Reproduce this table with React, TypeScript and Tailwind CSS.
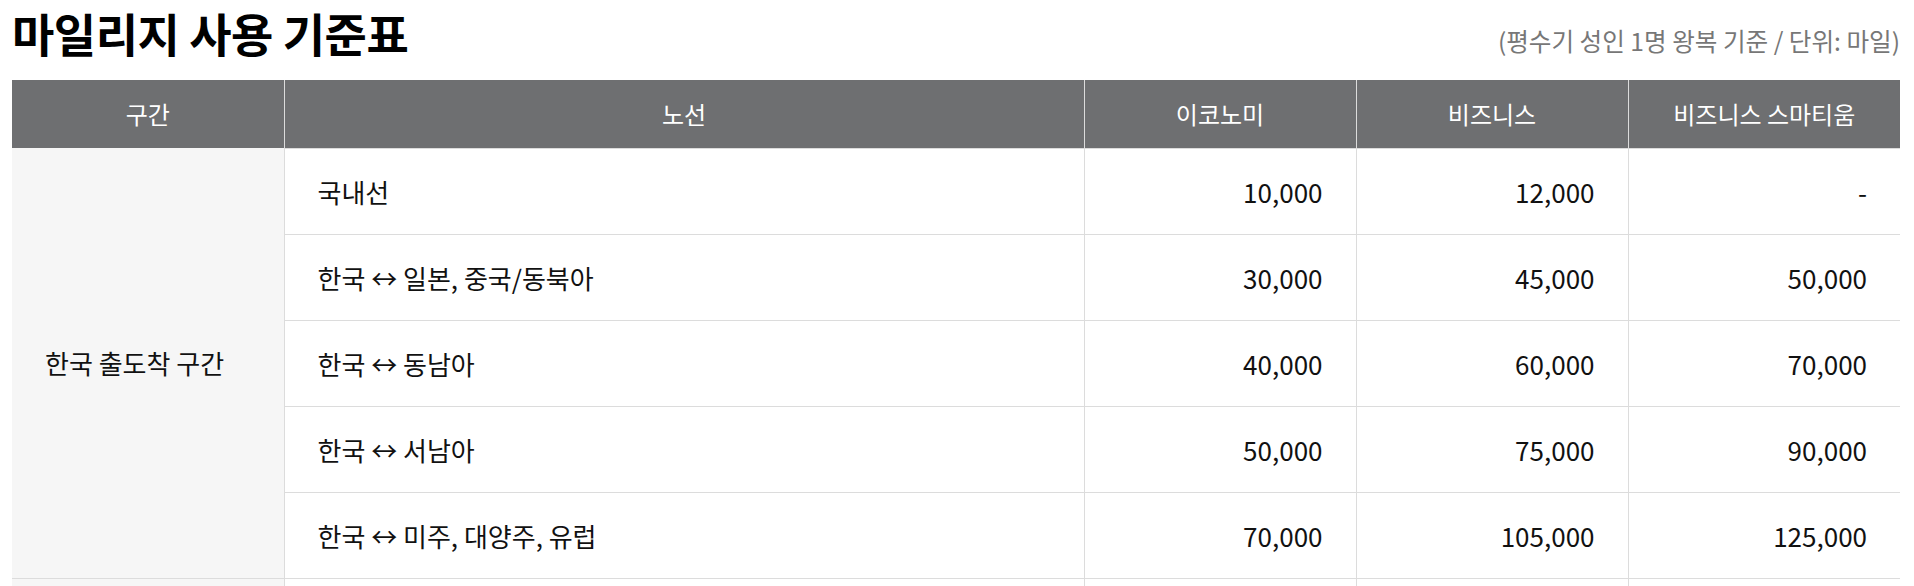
import React from 'react';

type Row = { route: string; economy: string; business: string; smartium: string };

const rows: Row[] = [
  { route: '국내선', economy: '10,000', business: '12,000', smartium: '-' },
  { route: '한국 ↔ 일본, 중국/동북아', economy: '30,000', business: '45,000', smartium: '50,000' },
  { route: '한국 ↔ 동남아', economy: '40,000', business: '60,000', smartium: '70,000' },
  { route: '한국 ↔ 서남아', economy: '50,000', business: '75,000', smartium: '90,000' },
  { route: '한국 ↔ 미주, 대양주, 유럽', economy: '70,000', business: '105,000', smartium: '125,000' },
];

export default function App() {
  return (
    <div className="w-[1914px] h-[586px] overflow-hidden bg-white pl-[12px] pr-[14px] font-['Noto_Sans_CJK_KR',sans-serif] text-[#111]">
      {/* Title */}
      <div className="flex items-end justify-between h-[80px] pb-[25px]">
        <h1 className="text-[46px] leading-none font-bold tracking-[-0.5px] text-black">마일리지 사용 기준표</h1>
        <p className="text-[24.6px] leading-none text-[#777] pb-[2px]">(평수기 성인 1명 왕복 기준 / 단위: 마일)</p>
      </div>

      {/* Table */}
      <table className="w-[1888px] table-fixed border-collapse">
        <colgroup>
          <col className="w-[272px]" />
          <col className="w-[800px]" />
          <col className="w-[272px]" />
          <col className="w-[272px]" />
          <col className="w-[272px]" />
        </colgroup>
        <thead>
          <tr className="h-[68px] bg-[#6e6f71] text-white text-[24px]">
            <th className="font-normal border-x border-[#dcdcdc] border-l-0">구간</th>
            <th className="font-normal border-x border-[#dcdcdc]">노선</th>
            <th className="font-normal border-x border-[#dcdcdc]">이코노미</th>
            <th className="font-normal border-x border-[#dcdcdc]">비즈니스</th>
            <th className="font-normal border-x border-[#dcdcdc] border-r-0">비즈니스 스마티움</th>
          </tr>
        </thead>
        <tbody className="text-[26px]">
          {rows.map((r, i) => (
            <tr key={r.route} className="h-[86px]">
              {i === 0 && (
                <td rowSpan={5} className="bg-[#f6f6f6] px-[33px] border-b border-r border-[#dcdcdc]">
                  한국 출도착 구간
                </td>
              )}
              <td className="px-[33px] border border-[#dcdcdc]">{r.route}</td>
              <td className="px-[33px] text-right border border-[#dcdcdc]">{r.economy}</td>
              <td className="px-[33px] text-right border border-[#dcdcdc]">{r.business}</td>
              <td className="px-[33px] text-right border border-[#dcdcdc] border-r-0">{r.smartium}</td>
            </tr>
          ))}
          <tr className="h-[86px]">
            <td className="bg-[#f6f6f6] border-r border-[#dcdcdc]"></td>
            <td className="border-x border-[#dcdcdc]"></td>
            <td className="border-x border-[#dcdcdc]"></td>
            <td className="border-x border-[#dcdcdc]"></td>
            <td className="border-l border-[#dcdcdc]"></td>
          </tr>
        </tbody>
      </table>
    </div>
  );
}
